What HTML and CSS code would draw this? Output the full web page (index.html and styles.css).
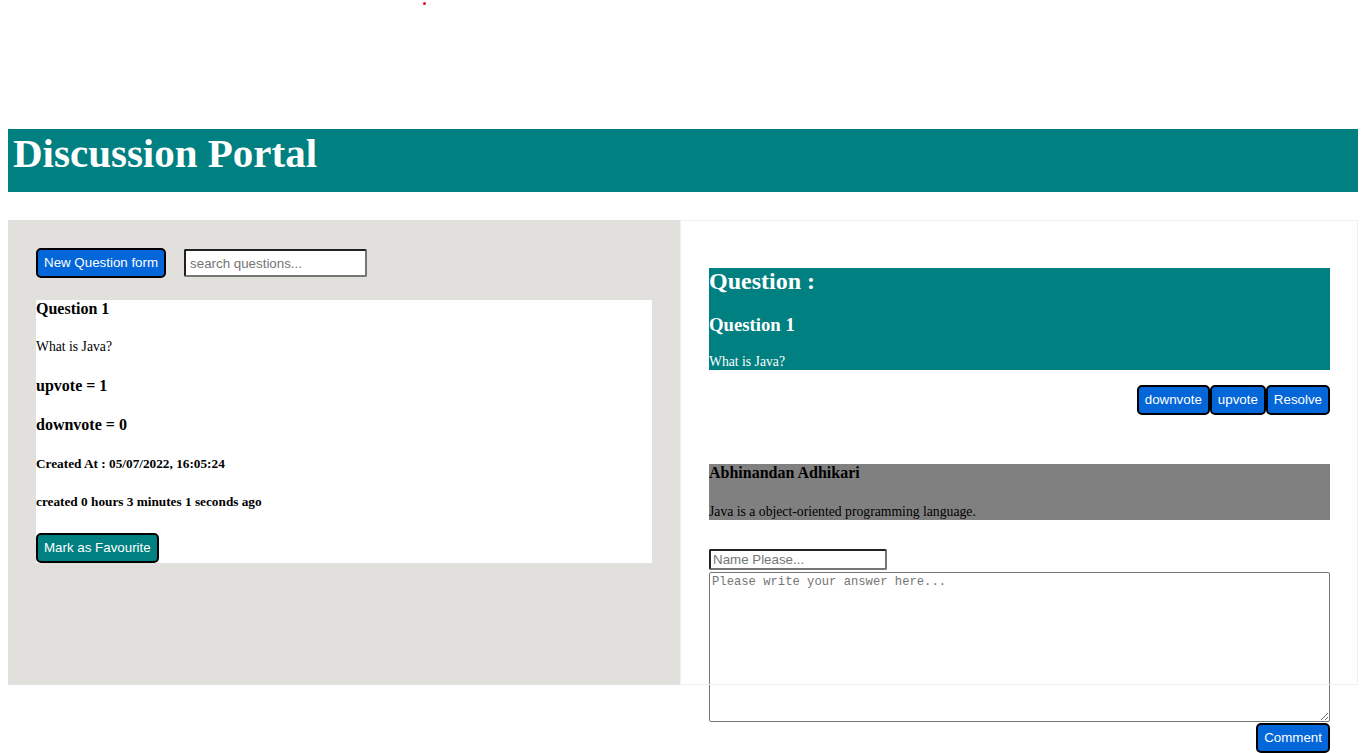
FILE: index.html
```html
<!DOCTYPE html>
<html lang="en">
<head>
<meta charset="utf-8">
<title>Discussion Portal</title>
<link rel="stylesheet" href="styles.css">
</head>
<body>
<span class="dot"></span>
<header class="banner">
  <h1>Discussion Portal</h1>
</header>
<main class="layout">
  <section class="panel-left">
    <div class="toolbar">
      <button class="btn btn-blue">New Question form</button>
      <input class="search" type="text" placeholder="search questions...">
    </div>
    <div class="card">
      <h4>Question 1</h4>
      <p>What is Java?</p>
      <h4>upvote = 1</h4>
      <h4>downvote = 0</h4>
      <h5>Created At : 05/07/2022, 16:05:24</h5>
      <h5>created 0 hours 3 minutes 1 seconds ago</h5>
      <button class="btn btn-teal">Mark as Favourite</button>
    </div>
  </section>
  <section class="panel-right">
    <div class="question-box">
      <h2>Question :</h2>
      <h3>Question 1</h3>
      <p>What is Java?</p>
    </div>
    <div class="actions">
      <button class="btn btn-blue">downvote</button>
      <button class="btn btn-blue">upvote</button>
      <button class="btn btn-blue">Resolve</button>
    </div>
    <div class="answer">
      <h4>Abhinandan Adhikari</h4>
      <p>Java is a object-oriented programming language.</p>
    </div>
    <div class="reply-form">
      <input class="name" type="text" placeholder="Name Please...">
      <textarea class="reply" placeholder="Please write your answer here..."></textarea>
      <button class="btn btn-blue btn-comment">Comment</button>
    </div>
  </section>
</main>
</body>
</html>
```

FILE: styles.css
```css
body {
  margin: 8px 8px 0;
  font-family: "Liberation Serif", "Times New Roman", serif;
  color: #000;
  background: #fff;
}

.dot {
  position: absolute;
  top: 2px;
  left: 423px;
  width: 3px;
  height: 3px;
  border-radius: 50%;
  background: #e8102e;
}

.banner {
  margin-top: 121px;
  width: 1355px;
  box-sizing: border-box;
  height: 63px;
  padding-left: 5px;
  background: #008080;
  color: #fff;
}

.banner h1 {
  margin: 0;
  font-size: 41px;
  font-weight: bold;
}

.layout {
  display: flex;
  align-items: flex-start;
  margin-top: 28px;
}

.panel-left {
  width: 672px;
  height: 465px;
  flex: none;
  box-sizing: border-box;
  padding: 28px;
  background: #e1e0dc;
}

.panel-right {
  position: relative;
  width: 678px;
  flex: none;
  box-sizing: border-box;
  padding: 28px 28px 0 29px;
}

.panel-right::before {
  content: "";
  position: absolute;
  top: 0;
  left: 0;
  right: 0;
  height: 465px;
  box-sizing: border-box;
  border: 1px solid #f0f0f0;
  pointer-events: none;
}

.toolbar {
  display: flex;
  align-items: center;
  gap: 18px;
}

.btn {
  font-family: "Liberation Sans", Arial, sans-serif;
  font-size: 13.33px;
  line-height: 16px;
  color: #fff;
  padding: 5px 6px;
  border: 2px solid #000;
  border-radius: 5px;
  cursor: pointer;
  margin: 0;
}

.btn-blue {
  background: #0366d9;
}

.btn-teal {
  background: #008080;
}

.search {
  width: 183px;
  height: 28px;
  box-sizing: border-box;
  padding: 0 4px;
  font-family: "Liberation Sans", Arial, sans-serif;
  font-size: 13.33px;
  border: 2px inset #767676;
  border-radius: 2px;
}

.search::placeholder,
.name::placeholder {
  color: #757575;
}

.card {
  margin-top: 22px;
  background: #fff;
}

.card h4,
.answer h4 {
  font-size: 16px;
  margin: 21.28px 0;
}

.card h4:first-child,
.answer h4:first-child {
  margin-top: 0;
}

.card p,
.answer p,
.question-box p {
  font-size: 13.7px;
  margin: 13.33px 0;
}

.card h5 {
  font-size: 13.28px;
  margin: 22.18px 0;
}

.card .btn {
  display: block;
  margin-top: 22.5px;
}

.question-box {
  margin-top: 20px;
  background: #008080;
  color: #fff;
}

.question-box h2 {
  margin: 0 0 18px;
  font-size: 24px;
}

.question-box h3 {
  margin: 18.72px 0;
  font-size: 18.72px;
}

.question-box p:last-child,
.answer p:last-child {
  margin-bottom: 0;
}

.actions {
  display: flex;
  justify-content: flex-end;
  margin-top: 15px;
}

.answer {
  margin-top: 49px;
  background: #808080;
}

.reply-form {
  display: flex;
  flex-direction: column;
  gap: 2px;
  margin-top: 29px;
}

.name {
  align-self: flex-start;
  width: 178px;
  box-sizing: border-box;
  margin: 0;
  padding: 1px 2px;
  font-family: "Liberation Sans", Arial, sans-serif;
  font-size: 13.33px;
  border: 2px inset #767676;
  border-radius: 2px;
}

.reply {
  width: 100%;
  height: 150px;
  box-sizing: border-box;
  margin: 0;
  padding: 2px;
  font-family: "Liberation Mono", "Courier New", monospace;
  font-size: 12.2px;
  border: 1px solid #767676;
  border-radius: 2px;
}

.reply::placeholder {
  color: #757575;
}

.btn-comment {
  align-self: flex-end;
  margin-top: -1px;
}
```
